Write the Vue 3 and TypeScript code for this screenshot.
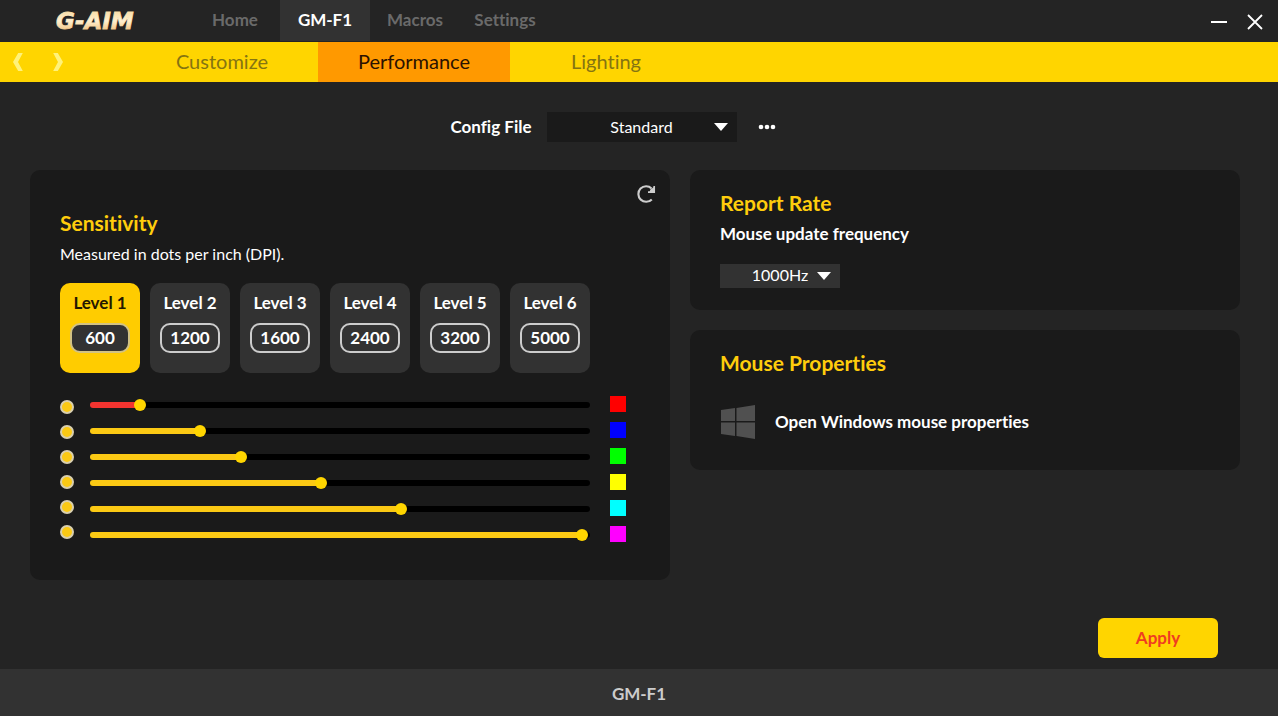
<script setup lang="ts">
import { computed, ref } from 'vue'

interface Level {
  dpi: number
  color: string
  colorName: string
}

const DPI_MIN = 160
const DPI_MAX = 5020

const mainTabs = ['Home', 'GM-F1', 'Macros', 'Settings']
const subTabs = ['Customize', 'Performance', 'Lighting']
const mainTab = ref('GM-F1')
const subTab = ref('Performance')
const config = ref('Standard')
const rate = ref('1000Hz')
const active = ref(0)
const enabled = ref([true, true, true, true, true, true])

const levels = ref<Level[]>([
  { dpi: 600, color: '#ff0000', colorName: 'red' },
  { dpi: 1200, color: '#0000ff', colorName: 'blue' },
  { dpi: 1600, color: '#00ff00', colorName: 'green' },
  { dpi: 2400, color: '#ffff00', colorName: 'yellow' },
  { dpi: 3200, color: '#00ffff', colorName: 'cyan' },
  { dpi: 5000, color: '#ff00ff', colorName: 'magenta' },
])

const fills = computed(() =>
  levels.value.map((l) => (l.dpi - DPI_MIN) / (DPI_MAX - DPI_MIN)),
)
</script>

<template>
  <div class="app">
    <header class="titlebar">
      <svg class="logo" viewBox="0 0 82 24" role="img" aria-label="G-AIM">
        <defs>
          <linearGradient id="gold" x1="0" y1="0" x2="0" y2="1">
            <stop offset="0" stop-color="#f6d79a" />
            <stop offset="0.5" stop-color="#fff0cf" />
            <stop offset="1" stop-color="#eeb56a" />
          </linearGradient>
        </defs>
        <text x="2" y="20" fill="url(#gold)" stroke="url(#gold)" stroke-width="0.8">G-AIM</text>
      </svg>
      <nav class="main-nav" aria-label="Main">
        <button
          v-for="tab in mainTabs"
          :key="tab"
          type="button"
          :class="{ active: tab === mainTab }"
          @click="mainTab = tab"
        >
          {{ tab }}
        </button>
      </nav>
      <div class="window-controls">
        <button type="button" aria-label="Minimize">
          <svg viewBox="0 0 18 18"><path d="M1 9H17" stroke="#fff" stroke-width="2" /></svg>
        </button>
        <button type="button" aria-label="Close">
          <svg viewBox="0 0 18 18"><path d="M2 2L16 16M16 2L2 16" stroke="#fff" stroke-width="1.8" /></svg>
        </button>
      </div>
    </header>

    <div class="subbar">
      <div class="arrows">
        <button type="button" aria-label="Previous">
          <svg viewBox="0 0 12 20"><path d="M6.2 1H10.8L6 10L10.8 19H6.2L1 10Z" fill="#fff27a" /></svg>
        </button>
        <button type="button" aria-label="Next">
          <svg viewBox="0 0 12 20"><path d="M5.8 1H1.2L6 10L1.2 19H5.8L11 10Z" fill="#fff27a" /></svg>
        </button>
      </div>
      <nav class="sub-nav" aria-label="Device">
        <button
          v-for="tab in subTabs"
          :key="tab"
          type="button"
          :class="{ active: tab === subTab }"
          @click="subTab = tab"
        >
          {{ tab }}
        </button>
      </nav>
    </div>

    <main>
      <div class="config">
        <label for="config">Config File</label>
        <div class="select config-select">
          <select id="config" v-model="config">
            <option>Standard</option>
          </select>
          <svg viewBox="0 0 14 8"><path d="M0 0H14L7 8Z" fill="#fff" /></svg>
        </div>
        <button type="button" class="more" aria-label="More options">
          <svg viewBox="0 0 18 6">
            <circle cx="3" cy="3" r="2.3" fill="#fff" />
            <circle cx="9" cy="3" r="2.3" fill="#fff" />
            <circle cx="15" cy="3" r="2.3" fill="#fff" />
          </svg>
        </button>
      </div>

      <div class="panels">
        <section class="panel sensitivity">
          <button type="button" class="reset" aria-label="Reset sensitivity">
            <svg viewBox="0 0 20 20" fill="none">
              <path d="M15.8 15.4A7.8 7.8 0 1 1 15.6 4.4" stroke="#ccc" stroke-width="2.1" />
              <path d="M18.2 2V8.2H12" stroke="#ccc" stroke-width="1.7" />
              <path d="M14.4 5.4L18 3V8H13.5Z" fill="#ccc" />
            </svg>
          </button>
          <h2>Sensitivity</h2>
          <p>Measured in dots per inch (DPI).</p>

          <div class="levels">
            <div
              v-for="(level, i) in levels"
              :key="i"
              class="level"
              :class="{ active: i === active }"
              @click="active = i"
            >
              <label :for="`dpi-${i}`">Level {{ i + 1 }}</label>
              <input :id="`dpi-${i}`" v-model.number="level.dpi" type="text" inputmode="numeric" />
            </div>
          </div>

          <div class="tuning">
            <div class="toggles">
              <input
                v-for="(level, i) in levels"
                :key="i"
                v-model="enabled[i]"
                type="checkbox"
                :aria-label="`Enable level ${i + 1}`"
              />
            </div>
            <div class="sliders">
              <input
                v-for="(level, i) in levels"
                :key="i"
                v-model.number="level.dpi"
                type="range"
                :min="DPI_MIN"
                :max="DPI_MAX"
                step="20"
                :class="{ active: i === active }"
                :style="{ '--fill': fills[i] }"
                :aria-label="`Level ${i + 1} DPI`"
              />
            </div>
            <div class="swatches">
              <button
                v-for="(level, i) in levels"
                :key="i"
                type="button"
                :style="{ backgroundColor: level.color }"
                :aria-label="`Level ${i + 1} color: ${level.colorName}`"
              ></button>
            </div>
          </div>
        </section>

        <div class="side">
          <section class="panel">
            <h2>Report Rate</h2>
            <label class="caption" for="rate">Mouse update frequency</label>
            <div class="select rate-select">
              <select id="rate" v-model="rate">
                <option>1000Hz</option>
                <option>500Hz</option>
                <option>250Hz</option>
                <option>125Hz</option>
              </select>
              <svg viewBox="0 0 14 8"><path d="M0 0H14L7 8Z" fill="#fff" /></svg>
            </div>
          </section>
          <section class="panel">
            <h2>Mouse Properties</h2>
            <button type="button" class="windows">
              <svg viewBox="0 0 36 36" fill="#505050">
                <path d="M1 6L15 4V17H1ZM16.5 4L35 1V17H16.5ZM1 18.5H15V32L1 30ZM16.5 18.5H35V35L16.5 32Z" />
              </svg>
              Open Windows mouse properties
            </button>
          </section>
        </div>
      </div>

      <button type="button" class="apply">Apply</button>
    </main>

    <footer>GM-F1</footer>
  </div>
</template>

<style>
body {
  margin: 0;
  background: #242424;
}
</style>

<style scoped>
* {
  box-sizing: border-box;
}

.app {
  display: flex;
  flex-direction: column;
  min-height: 100vh;
  background: #242424;
  color: #fff;
  font-family: Lato, 'Liberation Sans', sans-serif;
  font-size: 16px;
  font-variant-ligatures: none;
  line-height: 20px;
}

button,
input,
select {
  margin: 0;
  padding: 0;
  border: 0;
  background: none;
  color: inherit;
  font: inherit;
  font-variant-ligatures: none;
}

button {
  cursor: pointer;
}

svg {
  display: block;
}

.titlebar {
  display: flex;
  height: 42px;
  padding: 0 12px 0 54px;
}

.logo {
  align-self: center;
  width: 82px;
  height: 24px;
  font-family: 'DejaVu Sans', sans-serif;
  font-size: 23px;
  font-style: italic;
  font-weight: 700;
}

.main-nav {
  display: flex;
  flex: 1;
  padding: 0 0 1px 54px;
}

.main-nav button {
  width: 90px;
  padding-bottom: 2px;
  color: #6a6a6a;
  font-size: 17px;
  font-weight: 700;
}

.main-nav .active {
  background: #323232;
  color: #fff;
}

.window-controls {
  display: flex;
  align-items: center;
  gap: 14px;
  padding-top: 2px;
}

.window-controls button,
.window-controls svg {
  width: 22px;
  height: 18px;
}

.subbar {
  display: flex;
  height: 40px;
  background: #ffd500;
}

.arrows {
  display: flex;
  align-items: center;
  gap: 28px;
  width: 126px;
  padding-left: 12px;
}

.arrows svg {
  width: 12px;
  height: 20px;
}

.sub-nav {
  display: flex;
}

.sub-nav button {
  width: 192px;
  padding-bottom: 2px;
  color: #857412;
  font-size: 20px;
}

.sub-nav .active {
  background: #ff9900;
  color: #2b1200;
}

main {
  display: flex;
  flex: 1;
  flex-direction: column;
  padding: 30px 38px 11px 30px;
}

.config {
  display: flex;
  align-items: center;
  justify-content: center;
  gap: 15px;
  padding-right: 38px;
  font-size: 17px;
  font-weight: 700;
}

.select {
  position: relative;
  font-size: 16px;
  font-weight: 400;
}

.select select {
  width: 100%;
  height: 100%;
  appearance: none;
  text-align: center;
  text-align-last: center;
}

.select svg {
  position: absolute;
  top: calc(50% - 4px);
  right: 9px;
  width: 14px;
  height: 8px;
  pointer-events: none;
}

.config-select {
  width: 190px;
  height: 30px;
  background: #1a1a1a;
}

.more {
  display: flex;
  align-items: center;
  justify-content: center;
  width: 30px;
  height: 30px;
}

.more svg {
  width: 18px;
  height: 6px;
}

.panels {
  display: grid;
  grid-template-columns: 64fr 55fr;
  align-items: start;
  gap: 20px;
  margin-top: 28px;
}

.panel {
  padding: 20px 30px 22px;
  border-radius: 10px;
  background: #1a1a1a;
}

.side {
  display: grid;
  gap: 20px;
}

h2 {
  margin: 0;
  color: #ffcd0c;
  font-size: 21px;
  font-weight: 700;
  line-height: 26px;
}

p {
  margin: 0;
}

.sensitivity {
  display: flex;
  flex-direction: column;
  padding: 14px 14px 38px 30px;
}

.reset {
  align-self: flex-end;
}

.reset svg {
  width: 20px;
  height: 20px;
}

.sensitivity h2 {
  margin: 6px 0 8px;
}

.levels {
  display: flex;
  gap: 10px;
  margin-top: 19px;
}

.level {
  display: flex;
  flex-direction: column;
  align-items: center;
  gap: 10px;
  width: 80px;
  height: 90px;
  padding-top: 10px;
  border-radius: 10px;
  background: #323232;
  font-size: 17px;
  font-weight: 700;
}

.level input {
  width: 60px;
  height: 30px;
  padding-bottom: 2px;
  border: 2px solid #ccc;
  border-radius: 10px;
  background: #323232;
  color: #fff;
  text-align: center;
}

.level.active {
  background: #ffcc00;
  color: #241800;
}

.level.active input {
  border-color: #d2c283;
}

.tuning {
  display: flex;
  gap: 16px;
  margin: 21px 30px 0 0;
}

.toggles,
.sliders,
.swatches {
  display: flex;
  flex-direction: column;
}

.toggles {
  gap: 11px;
  padding-top: 6px;
}

.toggles input {
  width: 14px;
  height: 14px;
  border: 2px solid #d9cfae;
  border-radius: 50%;
  appearance: none;
}

.toggles input:checked {
  background: #fbc914;
}

.sliders {
  flex: 1;
  gap: 14px;
  padding-top: 5px;
}

.sliders input {
  width: 100%;
  height: 12px;
  appearance: none;
  --bar: #fbc914;
}

.sliders .active {
  --bar: #f23430;
}

.sliders input::-webkit-slider-runnable-track {
  height: 6px;
  border-radius: 3px;
  background: linear-gradient(
    to right,
    var(--bar) calc(6px + (100% - 12px) * var(--fill)),
    #000 calc(6px + (100% - 12px) * var(--fill))
  );
}

.sliders input::-webkit-slider-thumb {
  width: 12px;
  height: 12px;
  margin-top: -3px;
  border-radius: 50%;
  background: #ffd500;
  appearance: none;
}

.swatches {
  gap: 10px;
  padding: 2px 0 0 4px;
}

.swatches button {
  width: 16px;
  height: 16px;
}

.caption {
  display: block;
  margin-top: 8px;
  font-size: 17px;
  font-weight: 700;
}

.rate-select {
  width: 120px;
  height: 24px;
  margin-top: 20px;
  background: #323232;
}

.rate-select select {
  padding-bottom: 2px;
}

.windows {
  display: flex;
  align-items: center;
  gap: 19px;
  margin: 28px 0 8px;
  font-size: 17px;
  font-weight: 700;
}

.windows svg {
  width: 36px;
  height: 36px;
}

.apply {
  align-self: flex-end;
  width: 120px;
  height: 40px;
  margin: auto 22px 0 0;
  border-radius: 6px;
  background: #ffd500;
  color: #f03c20;
  font-size: 17px;
  font-weight: 700;
}

footer {
  display: flex;
  align-items: center;
  justify-content: center;
  height: 47px;
  padding-top: 2px;
  background: #323232;
  color: #ccc;
  font-size: 17px;
  font-weight: 700;
}
</style>
